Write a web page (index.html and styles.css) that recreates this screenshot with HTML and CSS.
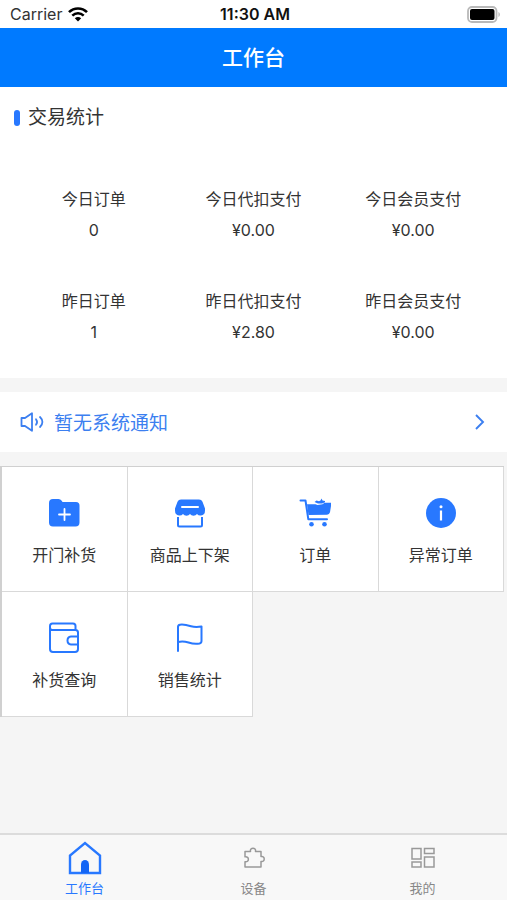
FILE: index.html
```html
<!DOCTYPE html>
<html lang="zh-CN">
<head>
    <meta charset="UTF-8">
    <meta name="viewport" content="width=device-width, initial-scale=1.0">
    <title>工作台</title>
    <link rel="stylesheet" href="styles.css">
</head>
<body>
    <div class="status-bar">
        <div class="carrier">
            <span>Carrier</span>
            <svg width="20" height="15" viewBox="0 0 20 15" fill="none" stroke="#000" stroke-width="2.6">
                <path d="M1 5.2C6 .2 14 .2 19 5.2"/>
                <path d="M4.3 8.6c3.3-3.1 8.1-3.1 11.4 0"/>
                <path d="M6.8 11.2c2-1.7 4.4-1.7 6.4 0L10 14.5z" fill="#000" stroke="none"/>
            </svg>
        </div>
        <span class="clock">11:30 AM</span>
        <div class="battery">
            <svg width="33" height="17" viewBox="0 0 33 17">
                <rect x="1" y="1" width="28.5" height="15" rx="4" fill="#fff" stroke="#b9b9b9" stroke-width="1.8"/>
                <rect x="3" y="3" width="24.5" height="11" rx="2" fill="#000"/>
                <path d="M31.5 6v5c1.7-.8 1.7-4.2 0-5z" fill="#b0b0b0"/>
            </svg>
        </div>
    </div>

    <header class="nav-bar">
        <h1>工作台</h1>
    </header>

    <main class="content">
        <section class="panel">
            <h2 class="panel-title">交易统计</h2>
            <dl class="stats">
                <div class="stat"><dt>今日订单</dt><dd>0</dd></div>
                <div class="stat"><dt>今日代扣支付</dt><dd>¥0.00</dd></div>
                <div class="stat"><dt>今日会员支付</dt><dd>¥0.00</dd></div>
                <div class="stat"><dt>昨日订单</dt><dd>1</dd></div>
                <div class="stat"><dt>昨日代扣支付</dt><dd>¥2.80</dd></div>
                <div class="stat"><dt>昨日会员支付</dt><dd>¥0.00</dd></div>
            </dl>
        </section>

        <a class="notice" href="#">
            <svg width="24" height="20" viewBox="0 0 24 20" fill="none" stroke="#3c7ff0" stroke-width="1.8" stroke-linejoin="round" stroke-linecap="round">
                <path d="M1.5 6H5l7-4.8v17.6L5 14H1.5z"/>
                <path d="M16 7.2c1.3 1.7 1.3 3.9 0 5.6M20 5c3.2 3 3.2 7 0 10"/>
            </svg>
            <span class="notice-text">暂无系统通知</span>
            <svg width="10" height="16" viewBox="0 0 10 16" fill="none" stroke="#3c7ff0" stroke-width="1.9">
                <path d="M1 1l7 7-7 7"/>
            </svg>
        </a>

        <!-- Menu -->
        <div class="menu">
            <button class="menu-item">
                <svg class="icon" viewBox="0 0 32 32">
                    <path d="M1 6q0-4 4-4h5.5q2 0 3.2 1.7L14.5 5H28q3.500 0 3.500 3.500V25.500q0 4-4 4H5q-4 0-4-4z" fill="#2878ff"/>
                    <path d="M16.500 12v11M11 17.500h11" stroke="#fff" stroke-width="1.800" stroke-linecap="round"/>
                </svg>
                <span>开门补货</span>
            </button>
            <button class="menu-item">
                <svg class="icon" viewBox="0 0 32 32">
                    <path d="M7 2.500h18q2.500 0 3.500 2.200L31 11.500v2q0 4.500-4 5-2.500.3-4-1.500-1.200 1.700-3.500 1.700T16 17q-1.200 1.700-3.500 1.700T9 17q-1.500 1.800-4 1.500-4-.5-4-5v-2l2.500-6.800Q4.500 2.500 7 2.500z" fill="#2878ff"/>
                    <path d="M8 10h16" stroke="#fff" stroke-width="2" stroke-linecap="round"/>
                    <path d="M4 20v8q0 1.500 1.500 1.500h21q1.500 0 1.500-1.500v-8" fill="none" stroke="#2878ff" stroke-width="2"/>
                </svg>
                <span>商品上下架</span>
            </button>
            <button class="menu-item">
                <svg class="icon" viewBox="0 0 32 32" fill="none" stroke="#2878ff">
                    <path d="M1.500 3.500h5l2.800 18.700H28" stroke-width="2" stroke-linejoin="round" stroke-linecap="round"/>
                    <path d="M8 7.200h8.500l2 .8 5-.8 2-1.400h7l-1.500 9.500q-.6 2.400-3 2.500L9.500 18z" fill="#2878ff" stroke="none"/>
                    <path d="M15.500 5l2-1.500 2.500.8 1.500-.8 1-2 1 2 2.500.5v1.300L23 6.500h-4z" fill="#2878ff" stroke="none"/>
                    <circle cx="12.500" cy="27.300" r="2.300" fill="#2878ff" stroke="none"/>
                    <circle cx="25.500" cy="27.300" r="2.300" fill="#2878ff" stroke="none"/>
                </svg>
                <span>订单</span>
            </button>
            <button class="menu-item">
                <svg class="icon" viewBox="0 0 32 32">
                    <circle cx="16" cy="16" r="15" fill="#2878ff"/>
                    <path d="M16 13.500v10" stroke="#fff" stroke-width="2.200"/>
                    <circle cx="16" cy="9.800" r="1.500" fill="#fff"/>
                </svg>
                <span>异常订单</span>
            </button>
            <button class="menu-item">
                <svg class="icon" viewBox="0 0 32 32" fill="none" stroke="#2878ff" stroke-width="2" stroke-linejoin="round">
                    <path d="M27.500 8V4q0-2.500-2.500-2.500H4.500Q2 1.500 2 4v23q0 3 3 3h22q3 0 3-3V10.500Q30 8 27.500 8H4.500Q2 8 2 5.500"/>
                    <path d="M30 14.500h-7q-3.500.5-3.500 4t3.500 4h7"/>
                </svg>
                <span>补货查询</span>
            </button>
            <button class="menu-item">
                <svg class="icon" viewBox="0 0 32 32" fill="none" stroke="#2878ff" stroke-width="2" stroke-linejoin="round" stroke-linecap="round">
                    <path d="M4 29V5q0-2 2-2.300c4-.6 7 .3 11 1.500 3.500 1 6 1 10.500.3V19q0 2-2 2.500c-4 .8-7.500.2-11-1-4-1.300-7-1.500-10.500-.5"/>
                </svg>
                <span>销售统计</span>
            </button>
        </div>
    </main>

    <nav class="tab-bar">
        <a class="tab active" href="#">
            <svg width="36" height="36" viewBox="0 0 36 36">
                <path d="M3 33V15.500L18 3l15 12.500V33z" fill="none" stroke="#2878ff" stroke-width="2.400"/>
                <path d="M14 33v-8.500a4 4.500 0 0 1 8 0V33z" fill="#1466f5"/>
            </svg>
            <span>工作台</span>
        </a>
        <a class="tab" href="#">
            <svg width="36" height="36" viewBox="0 0 36 36" fill="none" stroke="#999" stroke-width="1.500" stroke-linejoin="round">
                <path d="M9 11.500h5.500c-1-4.300 6-4.300 5 0H25v5c4.300-1 4.300 6 0 5v5.500H9v-5.200c4.500.8 4.500-5.800 0-5z"/>
            </svg>
            <span>设备</span>
        </a>
        <a class="tab" href="#">
            <svg width="36" height="36" viewBox="0 0 36 36" fill="none" stroke="#999" stroke-width="1.500">
                <path d="M7 8.500h9v10.500H7zM7 22h9v5H7zM19.500 8.500h9.500v5h-9.500zM19.500 17h9.500v10h-9.500z"/>
            </svg>
            <span>我的</span>
        </a>
    </nav>
</body>
</html>
```

FILE: styles.css
```css
* {
    box-sizing: border-box;
}

body {
    margin: 0;
    min-height: 100vh;
    display: flex;
    flex-direction: column;
    background: #f5f5f5;
    color: #333;
    font-family: "Inter", "Noto Sans CJK SC", sans-serif;
    font-size: 16px;
}

h1, h2, dl, dd {
    margin: 0;
}

a {
    color: inherit;
    text-decoration: none;
}

svg {
    display: block;
}

/* Status bar */
.status-bar {
    display: grid;
    grid-template-columns: 1fr auto 1fr;
    align-items: center;
    height: 28px;
    padding: 0 7px 0 10px;
    background: #fff;
}

.carrier {
    display: flex;
    align-items: center;
    gap: 6px;
}

.clock {
    color: #111;
    font-weight: 600;
}

.battery {
    display: flex;
    justify-content: flex-end;
}

/* Header */
.nav-bar {
    display: flex;
    align-items: center;
    justify-content: center;
    height: 59px;
    background: #007aff;
    color: #fff;
}

.nav-bar h1 {
    font-size: 21px;
    font-weight: 500;
    line-height: 30px;
}

.content {
    flex: 1;
}

/* Statistics */
.panel {
    padding: 17px 14px 30px;
    background: #fff;
}

.panel-title {
    display: flex;
    align-items: center;
    gap: 8px;
    font-size: 19px;
    font-weight: 400;
    line-height: 28px;
}

.panel-title::before {
    content: "";
    width: 6px;
    height: 16px;
    border-radius: 3px;
    background: #2878ff;
}

.stats {
    display: grid;
    grid-template-columns: repeat(3, 1fr);
    row-gap: 40px;
    padding-top: 52px;
    text-align: center;
}

.stat {
    line-height: 31px;
}

/* Notice */
.notice {
    display: flex;
    align-items: center;
    height: 60px;
    margin: 14px 0;
    padding: 0 22px 0 20px;
    background: #fff;
    color: #3c7ff0;
    font-size: 19px;
}

.notice-text {
    flex: 1;
    padding: 0 0 2px 10px;
}

/* Menu grid */
.menu {
    display: grid;
    grid-template-columns: repeat(4, 1fr);
    margin-right: 3px;
    border-top: 1px solid #d0d0d0;
    border-left: 2px solid #d0d0d0;
}

.menu-item {
    display: flex;
    flex-direction: column;
    align-items: center;
    gap: 14px;
    height: 125px;
    padding: 30px 0 0;
    border: 0 solid #d9d9d9;
    border-width: 0 1px 1px 0;
    background: #fff;
    color: #333;
    font: inherit;
    line-height: 24px;
}

.icon {
    width: 32px;
    height: 32px;
}

/* Tab bar */
.tab-bar {
    display: grid;
    grid-template-columns: repeat(3, 1fr);
    height: 67px;
    border-top: 2px solid #dcdcdc;
    background: #f8f8f8;
}

.tab {
    display: flex;
    flex-direction: column;
    align-items: center;
    gap: 2px;
    padding-top: 5px;
    color: #888;
    font-size: 13px;
    line-height: 20px;
}

.tab.active {
    color: #2878ff;
}
```
